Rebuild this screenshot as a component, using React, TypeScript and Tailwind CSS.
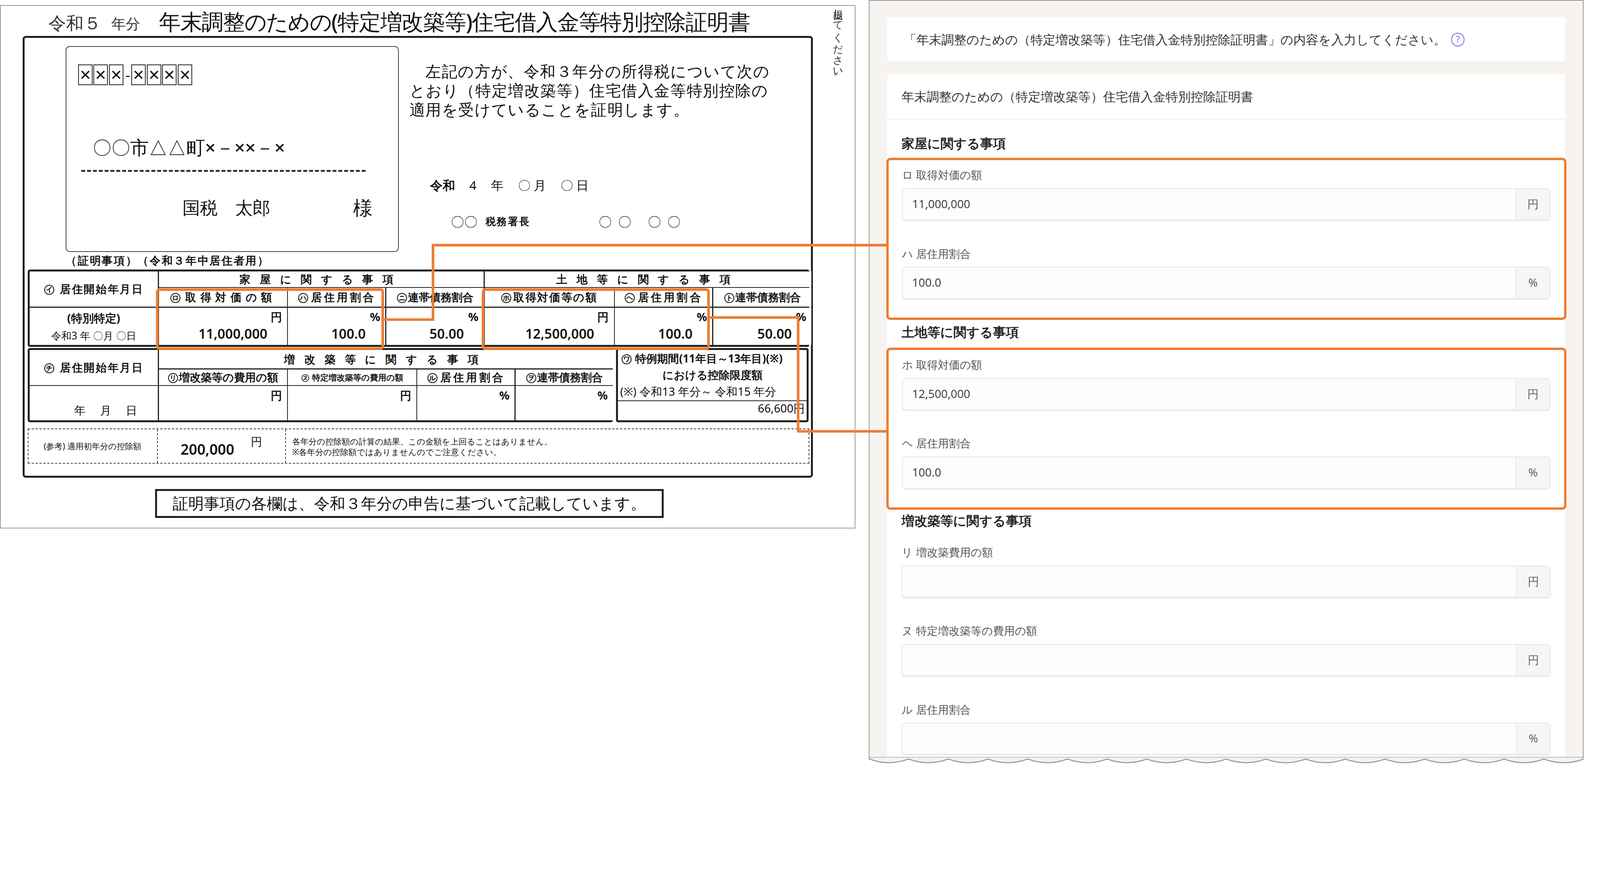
import React from "react";

const JP = "font-['Noto_Sans_CJK_JP','Noto_Sans',sans-serif]";

function Cell({ children, className = "" }: { children?: React.ReactNode; className?: string }) {
  return <div className={`bg-white flex items-center justify-center ${className}`}>{children}</div>;
}

function ValueCell({ unit, value }: { unit: string; value?: string }) {
  return (
    <div className="bg-white flex flex-col px-[5px] py-[2px]">
      <div className="text-right text-[11px] leading-[14px]">{unit}</div>
      <div className="text-right text-[13px] font-semibold leading-[18px] pr-[14px]">{value}</div>
    </div>
  );
}

function Field({ label, value, unit, first }: { label: string; value?: string; unit: string; first?: boolean }) {
  return (
    <div className={first ? "" : "mt-[24px]"}>
      <div className="text-[10.5px] leading-[16px] text-[#555] mb-[5px]">{label}</div>
      <div className="flex h-[31px] border border-[#e6e6ea] rounded-[3px] bg-[#fdfdfd] shadow-[0_1px_0_#eeeef2]">
        <div className="flex-1 flex items-center pl-[9px] text-[11px] text-[#444]">{value}</div>
        <div className="w-[33px] flex items-center justify-center border-l border-[#e6e6ea] bg-[#f6f6f8] text-[11px] text-[#666]">
          {unit}
        </div>
      </div>
    </div>
  );
}

function Heading({ children }: { children: React.ReactNode }) {
  return <div className="text-[12.5px] font-bold text-[#222] leading-[20px] px-[14px]">{children}</div>;
}

function Doc() {
  return (
    <div className={`w-[827px] h-[506px] mt-[5px] border border-[#9a9a9a] bg-white text-[#111] ${JP} flex flex-col relative`}>
      <div className="h-[28px] flex items-end pl-[46px] gap-[4px]">
        <span className="text-[17px] leading-[24px] text-[#333]">令和５</span>
        <span className="text-[14px] leading-[22px] ml-[6px] text-[#333]">年分</span>
        <span className="text-[21px] leading-[26px] ml-[14px] font-medium tracking-[-0.5px]">
          年末調整のための(特定増改築等)住宅借入金等特別控除証明書
        </span>
      </div>
      <div className="absolute right-[10px] top-[-4px] text-[10px] leading-[11px] [writing-mode:vertical-rl] text-[#333]">
        提出してください。
      </div>
      {/* main frame */}
      <div className="ml-[21px] mt-[1px] w-[764px] h-[427px] border-2 border-[#222] rounded-[3px] flex flex-col px-[2px]">
        <div className="flex">
          <div className="ml-[38px] mt-[8px] w-[322px] h-[199px] border border-[#444] rounded-[4px] flex flex-col">
            <div className="mt-[17px] ml-[11px] flex text-[14px] leading-[20px]">
              {[0, 1, 2].map((i) => (
                <span key={i} className="border border-[#222] w-[14px] h-[20px] flex items-center justify-center mr-[1px]">✕</span>
              ))}
              <span className="mx-[1px]">-</span>
              {[0, 1, 2, 3].map((i) => (
                <span key={i} className="border border-[#222] w-[14px] h-[20px] flex items-center justify-center mr-[1px]">✕</span>
              ))}
            </div>
            <div className="mt-[48px] ml-[25px] text-[18px] leading-[24px] font-medium">〇〇市△△町×－××－×</div>
            <div className="mt-[10px] ml-[14px] w-[275px] border-t-2 border-dashed border-[#333]" />
            <div className="mt-[22px] flex items-center text-[17px] leading-[24px] font-medium">
              <span className="ml-[112px]">国税　太郎</span>
              <span className="ml-[80px] text-[19px]">様</span>
            </div>
          </div>
          <div className="ml-[10px] flex flex-col">
            <div className="mt-[23px] text-[15px] leading-[18.5px] tracking-[0.6px]">
              <div>　左記の方が、令和３年分の所得税について次の</div>
              <div>とおり（特定増改築等）住宅借入金等特別控除の</div>
              <div>適用を受けていることを証明します。</div>
            </div>
            <div className="mt-[56px] ml-[20px] text-[12px] leading-[16px] flex gap-[14px]">
              <span className="font-bold">令和</span><span>4</span><span>年</span><span>〇 月</span><span>〇 日</span>
            </div>
            <div className="mt-[18px] ml-[40px] flex items-center text-[13px] leading-[18px]">
              <span>〇〇</span>
              <span className="ml-[8px] text-[10px] font-bold tracking-[1px]">税務署長</span>
              <span className="ml-[66px] tracking-[6px]">〇〇</span>
              <span className="ml-[10px] tracking-[6px]">〇〇</span>
            </div>
          </div>
        </div>
        <div className="mt-[1px] ml-[38px] text-[10.5px] leading-[14px] font-bold tracking-[1px]">（証明事項）（令和３年中居住者用）</div>

        {/* table 1 */}
        <div className="mt-[2px] ml-[1px] w-[756px] border-2 border-[#222] rounded-[2px] bg-[#222] grid grid-cols-[124px_124px_94px_94px_125px_94px_95px] grid-rows-[15px_18px_36px] gap-px text-[10.5px] font-bold">
          <Cell className="row-span-2 tracking-[1px]">㋑ 居住開始年月日</Cell>
          <Cell className="col-span-3 tracking-[9px]">家屋に関する事項</Cell>
          <Cell className="col-span-3 tracking-[9px]">土地等に関する事項</Cell>
          <Cell className="tracking-[4px]">㋺取得対価の額</Cell>
          <Cell className="tracking-[2px]">㋩居住用割合</Cell>
          <Cell>㋥連帯債務割合</Cell>
          <Cell className="tracking-[1px]">㋭取得対価等の額</Cell>
          <Cell className="tracking-[2px]">㋬居住用割合</Cell>
          <Cell>㋣連帯債務割合</Cell>
          <div className="bg-white flex flex-col items-center pt-[3px]">
            <span className="text-[11px] leading-[14px]">(特別特定)</span>
            <span className="text-[10px] font-normal leading-[16px] mt-[2px]">令和3 年 〇月 〇日</span>
          </div>
          <ValueCell unit="円" value="11,000,000" />
          <ValueCell unit="%" value="100.0" />
          <ValueCell unit="%" value="50.00" />
          <ValueCell unit="円" value="12,500,000" />
          <ValueCell unit="%" value="100.0" />
          <ValueCell unit="%" value="50.00" />
        </div>

        {/* table 2 */}
        <div className="mt-[1px] flex">
          <div className="ml-[1px] w-[566px] border-2 border-[#222] rounded-[2px] bg-[#222] grid grid-cols-[124px_124px_124px_94px_94px] grid-rows-[18px_15px_33px] gap-px text-[10.5px] font-bold">
            <Cell className="row-span-2 tracking-[1px]">㋠ 居住開始年月日</Cell>
            <Cell className="col-span-4 tracking-[9px]">増改築等に関する事項</Cell>
            <Cell>㋷増改築等の費用の額</Cell>
            <Cell className="text-[8px]">㋦ 特定増改築等の費用の額</Cell>
            <Cell className="tracking-[2px]">㋸居住用割合</Cell>
            <Cell>㋾連帯債務割合</Cell>
            <div className="bg-white flex items-end justify-end pr-[6px] pb-[1px] text-[11px] font-normal tracking-[14px]">年月日</div>
            <ValueCell unit="円" />
            <ValueCell unit="円" />
            <ValueCell unit="%" />
            <ValueCell unit="%" />
          </div>
          <div className="ml-[3px] w-[188px] border-2 border-[#222] rounded-[2px] flex flex-col text-[10.5px] font-bold">
            <div className="pl-[3px] leading-[15px] mt-[1px]">㋻ 特例期間(11年目～13年目)(※)</div>
            <div className="text-center leading-[16px]">における控除限度額</div>
            <div className="pl-[2px] leading-[17px] font-normal text-[11px] border-b border-[#222]">(※) 令和13 年分～ 令和15 年分</div>
            <div className="text-right pr-[2px] leading-[14px] font-normal text-[11px]">66,600円</div>
          </div>
        </div>

        {/* reference row */}
        <div className="mt-[6px] ml-[1px] w-[756px] h-[34px] border border-dashed border-[#444] flex text-[8px]">
          <div className="w-[125px] border-r border-dashed border-[#444] flex items-center justify-center">(参考) 適用初年分の控除額</div>
          <div className="w-[124px] border-r border-dashed border-[#444] flex items-end justify-center gap-[16px] pb-[4px]">
            <span className="text-[14px] font-semibold leading-[18px]">200,000</span>
            <span className="text-[11px] self-start mt-[4px]">円</span>
          </div>
          <div className="pl-[6px] pt-[7px] leading-[10px]">
            <div>各年分の控除額の計算の結果、この金額を上回ることはありません。</div>
            <div>※各年分の控除額ではありませんのでご注意ください。</div>
          </div>
        </div>
      </div>
      <div className="mt-[11px] ml-[149px] w-[492px] h-[28px] border-2 border-[#222] flex items-center justify-center text-[15px] font-medium">
        証明事項の各欄は、令和３年分の申告に基づいて記載しています。
      </div>
    </div>
  );
}

function Panel() {
  const waves = Array.from({ length: 18 }, (_, i) => i);
  return (
    <div className={`ml-[13px] w-[691px] flex flex-col ${JP}`}>
      <div className="h-[733px] overflow-hidden border-x border-t border-[#9a9a9a] bg-[#f6f3f0] px-[17px] pt-[16px]">
        <div className="h-[43px] bg-white rounded-[3px] flex items-center pl-[16px] text-[12px] text-[#333] shadow-[0_1px_1px_#eee]">
          「年末調整のための（特定増改築等）住宅借入金特別控除証明書」の内容を入力してください。
          <span className="ml-[5px] w-[13px] h-[13px] rounded-full border border-[#6c6ce0] text-[#6c6ce0] text-[9px] flex items-center justify-center leading-none">?</span>
        </div>
        <div className="mt-[12px] bg-white rounded-[3px] pb-[40px]">
          <div className="h-[44px] flex items-center pl-[14px] text-[12px] text-[#333] border-b border-[#eeeeee]">
            年末調整のための（特定増改築等）住宅借入金特別控除証明書
          </div>
          <div className="mt-[13px]"><Heading>家屋に関する事項</Heading></div>
          <div className="mt-[4px] -mx-[1px] border-[2.5px] border-[#ed7d31] rounded-[4px] px-[13px] pt-[6px] pb-[18px]">
            <Field first label="ロ 取得対価の額" value="11,000,000" unit="円" />
            <Field label="ハ 居住用割合" value="100.0" unit="%" />
          </div>
          <div className="mt-[2px]"><Heading>土地等に関する事項</Heading></div>
          <div className="mt-[5px] -mx-[1px] border-[2.5px] border-[#ed7d31] rounded-[4px] px-[13px] pt-[6px] pb-[18px]">
            <Field first label="ホ 取得対価の額" value="12,500,000" unit="円" />
            <Field label="ヘ 居住用割合" value="100.0" unit="%" />
          </div>
          <div className="mt-[1px]"><Heading>増改築等に関する事項</Heading></div>
          <div className="px-[14px] mt-[12px]">
            <Field first label="リ 増改築費用の額" unit="円" />
            <Field label="ヌ 特定増改築等の費用の額" unit="円" />
            <Field label="ル 居住用割合" unit="%" />
          </div>
        </div>
      </div>
      <svg width="691" height="10" viewBox="0 0 691 10" className="-mt-[1px]">
        <path
          d={
            "M0.5 0 L0.5 2 " +
            waves.map((i) => `Q${i * 38.4 + 19.2} 9 ${(i + 1) * 38.4} 2`).join(" ") +
            " L690.5 0 Z"
          }
          fill="#f6f3f0"
          stroke="#9a9a9a"
          strokeWidth="1"
        />
      </svg>
    </div>
  );
}

export default function App() {
  return (
    <div className="[zoom:2.648] w-[1695px] h-[844px] bg-white relative flex items-start">
      <Doc />
      <Panel />
      <svg className="absolute left-0 top-0 pointer-events-none" width="1550" height="771" viewBox="0 0 1550 771">
        <g fill="none" stroke="#ed7d31" strokeWidth="2.5">
          <rect x="152" y="280" width="218" height="57" rx="2" />
          <rect x="467" y="280" width="218" height="57" rx="2" />
          <polyline points="370,309 418.6,309 418.6,237 857,237" />
          <polyline points="685,307 771.6,307 771.6,417 857,417" />
        </g>
      </svg>
    </div>
  );
}
